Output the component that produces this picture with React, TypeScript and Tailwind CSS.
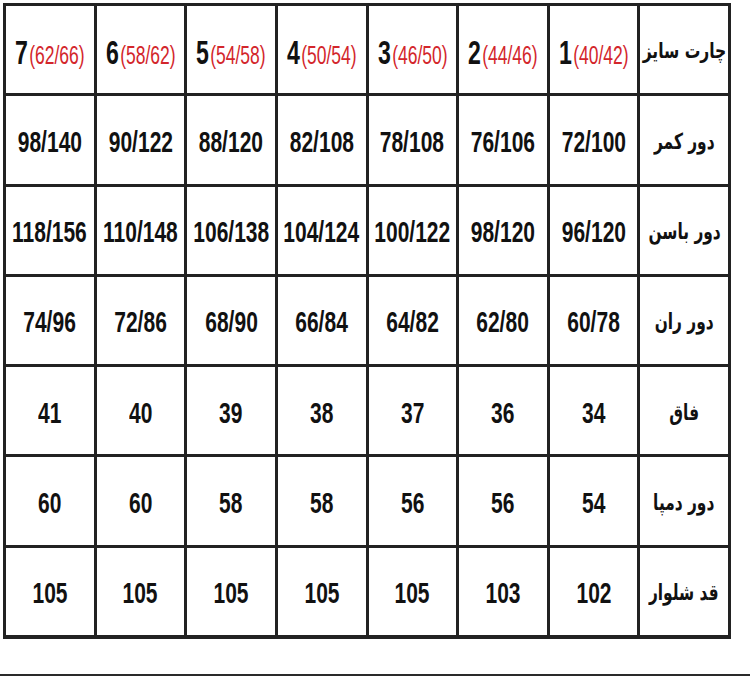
import React from "react";

const sizes: [string, string][] = [
  ["1", "(40/42)"],
  ["2", "(44/46)"],
  ["3", "(46/50)"],
  ["4", "(50/54)"],
  ["5", "(54/58)"],
  ["6", "(58/62)"],
  ["7", "(62/66)"],
];

const rows: [string, string[]][] = [
  ["دور کمر", ["72/100", "76/106", "78/108", "82/108", "88/120", "90/122", "98/140"]],
  ["دور باسن", ["96/120", "98/120", "100/122", "104/124", "106/138", "110/148", "118/156"]],
  ["دور ران", ["60/78", "62/80", "64/82", "66/84", "68/90", "72/86", "74/96"]],
  ["فاق", ["34", "36", "37", "38", "39", "40", "41"]],
  ["دور دمپا", ["54", "56", "56", "58", "58", "60", "60"]],
  ["قد شلوار", ["102", "103", "105", "105", "105", "105", "105"]],
];

const cell = "bg-white flex items-center justify-center overflow-visible min-w-0";

export default function App() {
  return (
    <div className="w-[750px] h-[676px] bg-white overflow-hidden flex flex-col">
      <div
        dir="rtl"
        className="ml-[3px] mt-[3px] w-[728px] h-[636px] border-[3px] border-b-4 border-[#222] bg-[#222] grid grid-cols-8 grid-rows-7 gap-[3px]"
      >
        <div className={cell}>
          <span className="inline-block whitespace-nowrap font-['DejaVu_Sans',sans-serif] font-bold text-[21px] leading-none text-[#111] scale-x-[0.74] pt-[4px]">
            چارت سایز
          </span>
        </div>
        {sizes.map(([n, r]) => (
          <div key={n} className={cell} dir="ltr">
            <span className="inline-block whitespace-nowrap font-['Liberation_Sans',sans-serif] leading-none scale-x-[0.7] pt-[6px]">
              <span className="font-bold text-[33px] text-[#111]">{n}</span>
              <span className="ml-[2px] text-[25px] text-[#d3262b]">{r}</span>
            </span>
          </div>
        ))}
        {rows.map(([label, vals]) => (
          <React.Fragment key={label}>
            <div className={cell}>
              <span className="inline-block whitespace-nowrap font-['DejaVu_Sans',sans-serif] font-bold text-[22px] leading-none text-[#111] scale-x-[0.7] pt-[4px]">
                {label}
              </span>
            </div>
            {vals.map((v, i) => (
              <div key={i} className={cell} dir="ltr">
                <span className="inline-block whitespace-nowrap font-['Liberation_Sans',sans-serif] font-bold text-[30px] leading-none text-[#111] scale-x-[0.7] pt-[4px]">
                  {v}
                </span>
              </div>
            ))}
          </React.Fragment>
        ))}
      </div>
      <div className="mt-[35px] h-[2px] w-full bg-[#2a2a2a]" />
    </div>
  );
}
